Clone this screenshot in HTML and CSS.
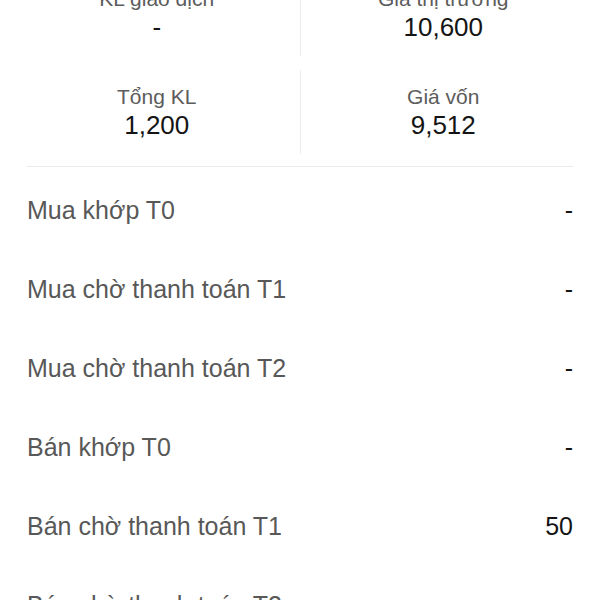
FILE: index.html
```html
<!DOCTYPE html>
<html lang="vi">
<head>
<meta charset="utf-8">
<link rel="stylesheet" href="styles.css">
</head>
<body>
<div class="screen">
  <div class="stats">
    <div class="cell">
      <div class="label">KL giao dịch</div>
      <div class="value">-</div>
    </div>
    <div class="vline"></div>
    <div class="cell">
      <div class="label">Giá thị trường</div>
      <div class="value">10,600</div>
    </div>
    <div class="cell">
      <div class="label">Tổng KL</div>
      <div class="value">1,200</div>
    </div>
    <div class="vline"></div>
    <div class="cell">
      <div class="label">Giá vốn</div>
      <div class="value">9,512</div>
    </div>
  </div>
  <div class="hline"></div>
  <div class="rows">
    <div class="row"><span class="name">Mua khớp T0</span><span class="num">-</span></div>
    <div class="row"><span class="name">Mua chờ thanh toán T1</span><span class="num">-</span></div>
    <div class="row"><span class="name">Mua chờ thanh toán T2</span><span class="num">-</span></div>
    <div class="row"><span class="name">Bán khớp T0</span><span class="num">-</span></div>
    <div class="row"><span class="name">Bán chờ thanh toán T1</span><span class="num">50</span></div>
    <div class="row"><span class="name">Bán chờ thanh toán T2</span><span class="num">-</span></div>
  </div>
</div>
</body>
</html>
```
FILE: styles.css
```css
html, body {
  margin: 0;
  padding: 0;
  background: #ffffff;
}
body {
  font-family: "Liberation Sans", Arial, sans-serif;
  width: 600px;
  height: 600px;
  overflow: hidden;
}
.screen {
  margin-top: -35px;
}
.stats {
  display: grid;
  grid-template-columns: 1fr 1px 1fr;
  padding: 0 14px;
}
.cell {
  padding: 21px 0;
  text-align: center;
}
.vline {
  background: #ececec;
  margin: 7px 0;
}
.label {
  font-size: 21px;
  line-height: 26px;
  color: #5c5c5c;
}
.value {
  font-size: 26px;
  line-height: 30px;
  color: #141414;
}
.hline {
  height: 1px;
  background: #ececec;
  margin: 5px 27px 0;
}
.rows {
  padding: 4px 27px 0;
}
.row {
  height: 79px;
  display: flex;
  align-items: center;
  justify-content: space-between;
  font-size: 25px;
}
.name {
  color: #585858;
}
.num {
  color: #141414;
}
```
